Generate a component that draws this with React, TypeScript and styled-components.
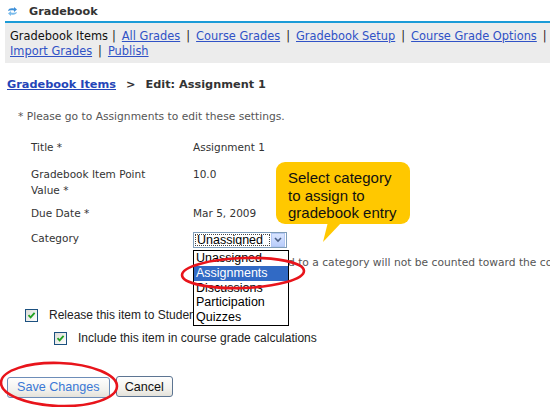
import React from "react";
import styled, { createGlobalStyle } from "styled-components";

const Global = createGlobalStyle`
  html, body { margin: 0; padding: 0; background: #fff; }
  body { font-family: "DejaVu Sans", Verdana, sans-serif; color: #222; }
`;

const Page = styled.div`
  width: 550px;
  height: 407px;
  overflow: hidden;
`;

const Header = styled.header`
  margin-left: 5px;
  height: 19px;
  padding: 2px 0 0 2px;
  border-bottom: 2px solid #1b9bd7;
  display: flex;
  align-items: center;
  gap: 11px;
  font: bold 11.2px "DejaVu Sans", Verdana, sans-serif;
  color: #333;
`;

const Nav = styled.nav`
  margin-left: 5px;
  background: #ececec;
  padding: 6px 4px 4px 5px;
  font-size: 11.4px;
  line-height: 15px;
  color: #111;
  white-space: nowrap;
  overflow: hidden;
`;

const NavLine = styled.div``;

const Link = styled.a`
  color: #3052c6;
  text-decoration: underline;
  cursor: pointer;
`;

const Sep = styled.span<{ $l?: number; $r?: number }>`
  color: #222;
  padding: 0 ${(p) => p.$r ?? 6}px 0 ${(p) => p.$l ?? 6}px;
`;

const Main = styled.main`
  padding-left: 7px;
`;

const Crumbs = styled.div`
  margin-top: 14px;
  line-height: 16px;
  font-weight: bold;
  font-size: 11.3px;
  color: #333;
  display: flex;
  gap: 10px;
`;

const CrumbLink = styled(Link)`
  color: #2445b8;
`;

const Note = styled.div`
  margin-top: 16px;
  padding-left: 11px;
  line-height: 16px;
  font-size: 10.7px;
  color: #555;
`;

const Row = styled.div<{ $top: number }>`
  margin-top: ${(p) => p.$top}px;
  padding-left: 24px;
  display: grid;
  grid-template-columns: 140px 1fr;
  column-gap: 22px;
  align-items: start;
  font-size: 10.5px;
  line-height: 16px;
  color: #333;
`;

const Label = styled.div``;
const Value = styled.div`
  position: relative;
`;

const SelectBox = styled.div`
  margin-top: 2px;
  width: 92px;
  height: 14px;
  border: 1px solid #7f9db9;
  background: #fff;
  display: flex;
  align-items: stretch;
  font: 12.5px "Liberation Sans", Arial, sans-serif;
  color: #000;
`;

const SelectText = styled.div`
  flex: 1;
  margin: 1px;
  border: 1px dotted #444;
  line-height: 10px;
  padding-left: 1px;
  overflow: hidden;
  display: flex;
  align-items: center;
`;

const SelectArrow = styled.div`
  width: 14px;
  margin: 0 1px 0 0;
  background: linear-gradient(#d9e5ff, #b9cdfb);
  border: 1px solid #b3c7f3;
  box-sizing: border-box;
  display: flex;
  align-items: center;
  justify-content: center;
`;

const List = styled.ul`
  position: absolute;
  left: 0;
  top: calc(100% + 2px);
  z-index: 3;
  margin: 0;
  padding: 0;
  list-style: none;
  width: 94px;
  border: 1px solid #000;
  background: #fff;
  font: 12.5px "Liberation Sans", Arial, sans-serif;
  color: #000;
`;

const Option = styled.li<{ $active?: boolean }>`
  position: relative;
  height: 14.8px;
  line-height: 14.8px;
  padding-left: 2px;
  background: ${(p) => (p.$active ? "#316ac5" : "transparent")};
  color: ${(p) => (p.$active ? "#fff" : "#000")};
`;

const SelectWrap = styled.div`
  position: relative;
  width: 94px;
`;

const Helper = styled.div`
  margin-top: 7px;
  font-size: 10.7px;
  line-height: 16px;
  color: #555;
  white-space: nowrap;
`;

const Callout = styled.div`
  position: absolute;
  left: 83px;
  top: -68px;
  width: 122px;
  height: 55px;
  padding: 7px 0 0 12px;
  background: #ffc800;
  border-radius: 9px;
  font: 15px/17.5px "Liberation Sans", Arial, sans-serif;
  color: #111;
  z-index: 4;
  white-space: nowrap;
`;

const Tail = styled.svg`
  position: absolute;
  left: 45px;
  top: 60px;
  overflow: visible;
`;

const Ring = styled.svg`
  position: absolute;
  overflow: visible;
  pointer-events: none;
  z-index: 5;
`;

const CheckRow = styled.label<{ $top: number; $indent: number }>`
  margin-top: ${(p) => p.$top}px;
  padding-left: ${(p) => p.$indent}px;
  display: flex;
  align-items: center;
  gap: 11px;
  height: 16px;
  font: 12px "Liberation Sans", Arial, sans-serif;
  color: #222;
  white-space: nowrap;
`;

const Box = styled.span`
  width: 11px;
  height: 11px;
  border: 1px solid #1c5180;
  background: linear-gradient(135deg, #dcdcd6, #fff);
  display: flex;
  align-items: center;
  justify-content: center;
  flex: none;
`;

const Buttons = styled.div`
  margin-top: 30px;
  display: flex;
  gap: 6px;
`;

const BtnWrap = styled.div`
  position: relative;
`;

const Button = styled.button<{ $primary?: boolean }>`
  height: 21px;
  padding: 0 ${(p) => (p.$primary ? 9 : 8)}px;
  border: 1px solid ${(p) => (p.$primary ? "#6d8db8" : "#5d7592")};
  border-radius: 3px;
  background: linear-gradient(#fefefe, #f3f2ee 60%, #e4e2da);
  font: 12.6px "Liberation Sans", Arial, sans-serif;
  color: ${(p) => (p.$primary ? "#3a78d6" : "#111")};
  cursor: pointer;
`;

const Check = () => (
  <svg width="9" height="9" viewBox="0 0 9 9">
    <path d="M1.5 4.2 L3.6 6.4 L7.6 1.8" fill="none" stroke="#21a121" strokeWidth="1.8" />
  </svg>
);

const SyncIcon = () => (
  <svg width="11" height="11" viewBox="0 0 11 11">
    <path d="M1 5 C1.5 2.5 4 2 7 2.6 L7 1 L10 3.6 L7 6 L7 4.4 C4.5 4 2.5 4.2 1 5 Z" fill="#3d8fd8" />
    <path d="M10 6 C9.5 8.5 7 9 4 8.4 L4 10 L1 7.4 L4 5 L4 6.6 C6.5 7 8.5 6.8 10 6 Z" fill="#7bbcec" />
  </svg>
);

export default function App() {
  return (
    <Page>
      <Global />
      <Header>
        <SyncIcon />
        <span>Gradebook</span>
      </Header>
      <Nav>
        <NavLine>
          Gradebook Items<Sep $l={4} $r={6}>|</Sep>
          <Link>All Grades</Link>
          <Sep>|</Sep>
          <Link>Course Grades</Link>
          <Sep>|</Sep>
          <Link>Gradebook Setup</Link>
          <Sep>|</Sep>
          <Link>Course Grade Options</Link>
          <Sep>|</Sep>
        </NavLine>
        <NavLine>
          <Link>Import Grades</Link>
          <Sep>|</Sep>
          <Link>Publish</Link>
        </NavLine>
      </Nav>
      <Main>
        <Crumbs>
          <CrumbLink>Gradebook Items</CrumbLink>
          <span>&gt;</span>
          <span>Edit: Assignment 1</span>
        </Crumbs>
        <Note>* Please go to Assignments to edit these settings.</Note>
        <Row $top={14}>
          <Label>Title *</Label>
          <Value>Assignment 1</Value>
        </Row>
        <Row $top={11}>
          <Label>
            Gradebook Item Point
            <br />
            Value *
          </Label>
          <Value>10.0</Value>
        </Row>
        <Row $top={7}>
          <Label>Due Date *</Label>
          <Value>Mar 5, 2009</Value>
        </Row>
        <Row $top={9}>
          <Label>Category</Label>
          <Value>
            <Callout>
              Select category
              <br />
              to assign to
              <br />
              gradebook entry
              <Tail width="20" height="22">
                <path d="M7 0 L21 0 L2 20 Z" fill="#ffc800" />
              </Tail>
            </Callout>
            <SelectWrap>
              <SelectBox>
                <SelectText>Unassigned</SelectText>
                <SelectArrow>
                  <svg width="8" height="6" viewBox="0 0 8 6">
                    <path d="M1 1 L4 4 L7 1" fill="none" stroke="#4b5f86" strokeWidth="1.6" />
                  </svg>
                </SelectArrow>
              </SelectBox>
              <List>
                <Option>Unassigned</Option>
                <Option $active>
                  Assignments
                  <Ring width="126" height="34" style={{ left: -14, top: -10 }}>
                    <ellipse
                      cx="63"
                      cy="17"
                      rx="61"
                      ry="15"
                      fill="none"
                      stroke="#e8141b"
                      strokeWidth="2.6"
                      transform="rotate(-2 63 17)"
                    />
                  </Ring>
                </Option>
                <Option>Discussions</Option>
                <Option>Participation</Option>
                <Option>Quizzes</Option>
              </List>
            </SelectWrap>
            <Helper>Items not assigned to a category will not be counted toward the course grade.</Helper>
          </Value>
        </Row>
        <CheckRow $top={36} $indent={18}>
          <Box>
            <Check />
          </Box>
          Release this item to Students
        </CheckRow>
        <CheckRow $top={7} $indent={47}>
          <Box>
            <Check />
          </Box>
          Include this item in course grade calculations
        </CheckRow>
        <Buttons>
          <BtnWrap>
            <Button $primary>Save Changes</Button>
            <Ring width="124" height="49" style={{ left: -10, top: -16 }}>
              <ellipse
                cx="62"
                cy="24.5"
                rx="58"
                ry="21.5"
                fill="none"
                stroke="#e8141b"
                strokeWidth="2.6"
                transform="rotate(2 62 24.5)"
              />
            </Ring>
          </BtnWrap>
          <Button>Cancel</Button>
        </Buttons>
      </Main>
    </Page>
  );
}
